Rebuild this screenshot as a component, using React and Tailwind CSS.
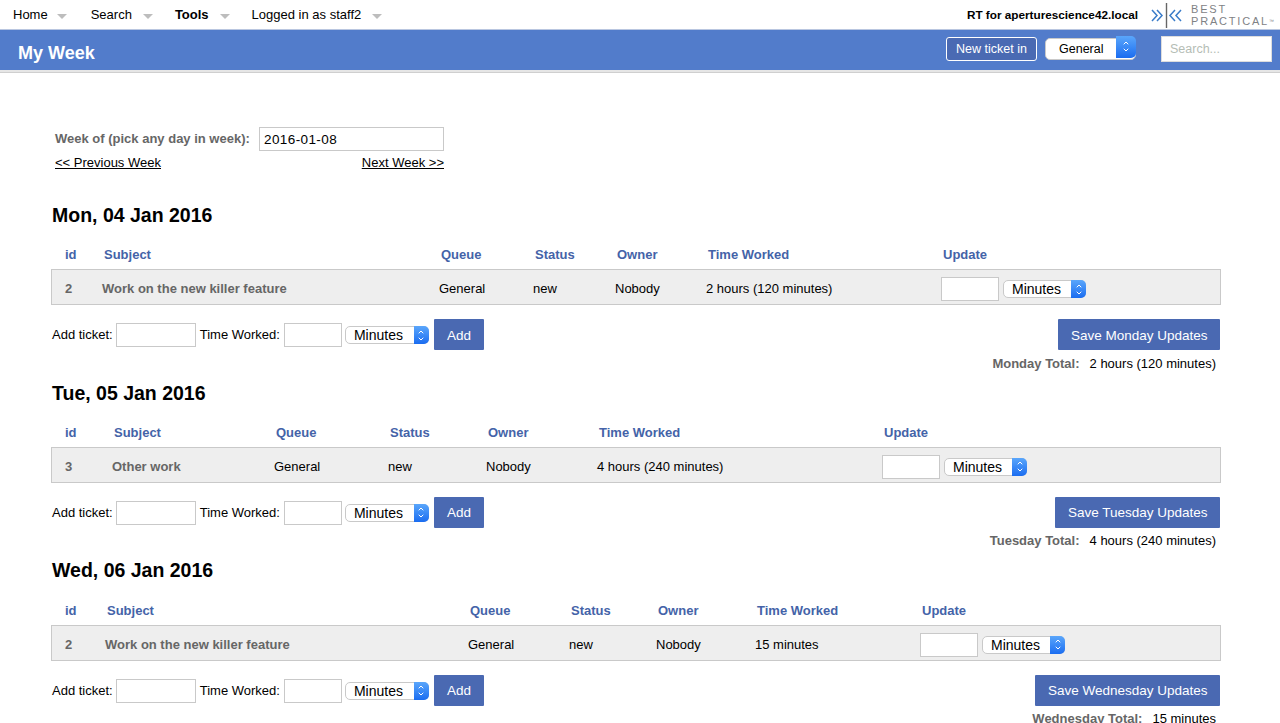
import { ChevronDown, ChevronUp } from "lucide-react";

const DAYS = [
  {
    title: "Mon, 04 Jan 2016",
    cols: "grid-cols-[39px_337px_94px_82px_91px_235px_1fr]",
    id: "2",
    subject: "Work on the new killer feature",
    worked: "2 hours (120 minutes)",
    name: "Monday",
  },
  {
    title: "Tue, 05 Jan 2016",
    cols: "grid-cols-[49px_162px_114px_98px_111px_285px_1fr]",
    id: "3",
    subject: "Other work",
    worked: "4 hours (240 minutes)",
    name: "Tuesday",
  },
  {
    title: "Wed, 06 Jan 2016",
    cols: "grid-cols-[42px_363px_101px_87px_99px_165px_1fr]",
    id: "2",
    subject: "Work on the new killer feature",
    worked: "15 minutes",
    name: "Wednesday",
  },
];

const HEADERS = ["id", "Subject", "Queue", "Status", "Owner", "Time Worked", "Update"];

function MacSelect({ value, width, height = "h-[18px]", arrow = "w-[15px]", text = "pl-[8px] text-[14px]" }) {
  return (
    <div className={`relative shrink-0 ${width} ${height}`}>
      <select
        defaultValue={value}
        className={`appearance-none w-full h-full bg-white rounded-[5px] border border-[#c9c9c9] text-black leading-none outline-none ${text}`}
      >
        <option>{value}</option>
      </select>
      <div
        className={`absolute right-0 top-0 bottom-0 ${arrow} rounded-r-[5px] bg-gradient-to-b from-[#5aa6fb] to-[#1a6cf0] flex flex-col items-center justify-center text-white pointer-events-none`}
      >
        <ChevronUp size={8} strokeWidth={3} className="-mb-[1px]" />
        <ChevronDown size={8} strokeWidth={3} />
      </div>
    </div>
  );
}

function NavItem({ label, bold, gap }) {
  return (
    <div className={`flex items-center ${gap}`}>
      <span className={`text-[13px] text-black ${bold ? "font-bold" : ""}`}>{label}</span>
      <span className="mt-[3px] w-0 h-0 border-x-[5px] border-x-transparent border-t-[5px] border-t-[#bdbdbd]" />
    </div>
  );
}

function TopNav() {
  return (
    <div className="h-[29px] flex items-center justify-between bg-white">
      <div className="flex items-center pl-[13px]">
        <NavItem label="Home" gap="gap-[9px] mr-[24px]" />
        <NavItem label="Search" gap="gap-[11px] mr-[22px]" />
        <NavItem label="Tools" bold gap="gap-[11px] mr-[22px]" />
        <NavItem label="Logged in as staff2" gap="gap-[11px]" />
      </div>
      <div className="flex items-center">
        <span className="text-[11.75px] font-bold text-black mr-[12px]">RT for aperturescience42.local</span>
        <svg width="33" height="26" viewBox="0 0 33 26" fill="none" stroke="#3a7cc9" strokeWidth="1.5">
          <path d="M2 8 L7 13.5 L2 19 M7 8 L12 13.5 L7 19" />
          <path d="M16.5 1 V26" stroke="#666666" strokeWidth="1.4" />
          <path d="M25 8 L20 13.5 L25 19 M31 8 L26 13.5 L31 19" />
        </svg>
        <div className="ml-[8px] w-[89px] text-[#7f8285] text-[11px] leading-[12px] tracking-[1.8px]">
          <div>BEST</div>
          <div className="whitespace-nowrap">
            PRACTICAL<span className="align-top text-[5px] tracking-normal">™</span>
          </div>
        </div>
      </div>
    </div>
  );
}

function TitleBar() {
  return (
    <div className="h-[41px] border-t border-[#b9c6e0] bg-[#527ccb] flex items-center justify-between">
      <h1 className="pl-[18px] mt-[6px] text-[18px] font-bold text-white">My Week</h1>
      <div className="flex items-center pr-[8px] pb-[3px]">
        <button className="h-[24px] w-[91px] pt-[1px] rounded-[3px] border border-white bg-[#4a6ab3] text-white text-[12.5px]">
          New ticket in
        </button>
        <MacSelect
          value="General"
          width="w-[91px] ml-[8px] mb-[4px]"
          height="h-[22px]"
          arrow="w-[20px]"
          text="pl-[13px] text-[12.5px]"
        />
        <input
          placeholder="Search..."
          className="ml-[25px] h-[26px] w-[111px] bg-white border border-[#dddddd] px-[8px] text-[12.5px] outline-none placeholder:text-[#b5bdb5]"
        />
      </div>
    </div>
  );
}

function DaySection({ day }) {
  return (
    <section className="h-[177.7px]">
      <h2 className="h-[24px] leading-[24px] text-[19.5px] font-bold text-black pl-[52px]">{day.title}</h2>

      <div className={`mt-[20.2px] ml-[65px] h-[16px] leading-[16px] grid ${day.cols} mr-[59px]`}>
        {HEADERS.map((h) => (
          <span key={h} className="text-[13px] font-bold text-[#4463a8] whitespace-nowrap">
            {h}
          </span>
        ))}
      </div>

      <div className="mt-[6px] ml-[51px] w-[1170px] h-[36px] border border-[#c9c9c9] bg-[#eeeeee] pl-[11px] pt-[4px]">
        <div className={`grid ${day.cols} items-center h-full text-[13px] text-black`}>
          <span className="pl-[2px] font-bold text-[#666666]">{day.id}</span>
          <span className="font-bold text-[#666666] whitespace-nowrap">{day.subject}</span>
          <span>General</span>
          <span>new</span>
          <span>Nobody</span>
          <span className="whitespace-nowrap">{day.worked}</span>
          <div className="flex items-center gap-[4px]">
            <input className="w-[58px] h-[24px] bg-white border border-[#c9c9c9]" />
            <MacSelect value="Minutes" width="w-[83px]" />
          </div>
        </div>
      </div>

      <div className="mt-[14px] ml-[52px] w-[1168px] flex items-start justify-between">
        <div className="flex items-center h-[31px] pt-[1px] text-[13px] text-black">
          <span>Add ticket:</span>
          <input className="ml-[3px] w-[80px] h-[24px] bg-white border border-[#c9c9c9]" />
          <span className="ml-[4px]">Time Worked:</span>
          <input className="ml-[4px] w-[58px] h-[24px] bg-white border border-[#c9c9c9]" />
          <MacSelect value="Minutes" width="w-[84px] ml-[3px]" />
          <button className="ml-[5px] self-start -mt-[1px] w-[50px] h-[31px] pt-[2px] bg-[#4a69b2] rounded-[1px] text-white text-[13.5px]">
            Add
          </button>
        </div>
        <button className="h-[31px] px-[12.5px] pt-[2px] bg-[#4a69b2] rounded-[1px] text-white text-[13.5px] whitespace-nowrap">
          Save {day.name} Updates
        </button>
      </div>

      <div className="mt-[5.5px] w-[1216px] flex justify-end text-[13px] leading-[16px] whitespace-nowrap">
        <span className="font-bold text-[#666666]">{day.name} Total:</span>
        <span className="ml-[10px] text-black">{day.worked}</span>
      </div>
    </section>
  );
}

export default function App() {
  return (
    <div className="h-screen overflow-hidden bg-white font-['Liberation_Sans',Arial,sans-serif]">
      <TopNav />
      <TitleBar />
      <div className="h-[3px] bg-[#e6e6e6] border-b border-[#cfcfcf]" />

      <div className="ml-[55px] mt-[54px] w-[389px] text-[13px]">
        <div className="flex items-center h-[24px]">
          <span className="font-bold text-[#666666] whitespace-nowrap">Week of (pick any day in week):</span>
          <input
            defaultValue="2016-01-08"
            className="ml-auto w-[185px] h-[24px] border border-[#c9c9c9] px-[4px] text-[13.5px] text-black tracking-[0.4px] outline-none"
          />
        </div>
        <div className="mt-[2px] h-[17px] flex justify-between text-black underline">
          <a href="#">&lt;&lt; Previous Week</a>
          <a href="#">Next Week &gt;&gt;</a>
        </div>
      </div>

      <div className="mt-[33px]">
        {DAYS.map((day) => (
          <DaySection key={day.title} day={day} />
        ))}
      </div>
    </div>
  );
}
